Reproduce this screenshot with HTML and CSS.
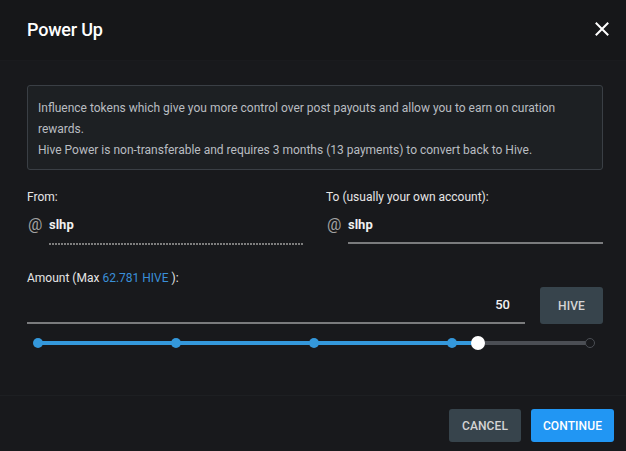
FILE: index.html
```html
<!DOCTYPE html>
<html>
<head>
<meta charset="utf-8">
<link rel="stylesheet" href="styles.css">
</head>
<body>
<div class="dialog">
  <header class="head">
    <h1 class="title">Power Up</h1>
    <button class="close" aria-label="close">
      <svg width="14" height="14" viewBox="0 0 14 14"><path d="M1.5 1.5 L12.5 12.5 M12.5 1.5 L1.5 12.5" stroke="#fff" stroke-width="2" stroke-linecap="square"/></svg>
    </button>
  </header>
  <main class="body">
    <div class="info">
      <p>Influence tokens which give you more control over post payouts and allow you to earn on curation rewards.</p>
      <p>Hive Power is non-transferable and requires 3 months (13 payments) to convert back to Hive.</p>
    </div>
    <div class="accounts">
      <div class="field">
        <div class="label">From:</div>
        <div class="row">
          <span class="at">@</span>
          <span class="value dashed">slhp</span>
        </div>
      </div>
      <div class="field">
        <div class="label">To (usually your own account):</div>
        <div class="row">
          <span class="at">@</span>
          <span class="value solid">slhp</span>
        </div>
      </div>
    </div>
    <div class="label amount-label">Amount (Max <span class="link">62.781 HIVE</span> ):</div>
    <div class="amount-row">
      <div class="amount-input">50</div>
      <button class="btn btn-grey hive">HIVE</button>
    </div>
    <div class="slider">
      <div class="track"></div>
      <div class="fill" style="width: 79.64%"></div>
      <span class="mark on" style="left: 0%"></span>
      <span class="mark on" style="left: 25%"></span>
      <span class="mark on" style="left: 50%"></span>
      <span class="mark on" style="left: 75%"></span>
      <span class="mark off" style="left: 100%"></span>
      <span class="thumb" style="left: 79.64%"></span>
    </div>
  </main>
  <footer class="foot">
    <button class="btn btn-grey">CANCEL</button>
    <button class="btn btn-blue">CONTINUE</button>
  </footer>
</div>
</body>
</html>
```
FILE: styles.css
```css
* { box-sizing: border-box; }
html, body {
  margin: 0;
  padding: 0;
  background: #18191c;
  font-family: Roboto, "Liberation Sans", sans-serif;
  color: #e8e8e8;
}
.dialog {
  width: 626px;
  height: 451px;
  background: #18191c;
  display: flex;
  flex-direction: column;
}
.head {
  height: 61px;
  background: #161719;
  border-bottom: 1px solid #1a1b1e;
  display: flex;
  align-items: center;
  justify-content: space-between;
  padding: 0 17px 0 27px;
}
.title {
  margin: 0;
  font-size: 18px;
  font-weight: 500;
  color: #fff;
  letter-spacing: -0.2px;
  padding-bottom: 1px;
}
.close {
  background: none;
  border: 0;
  padding: 0;
  width: 14px;
  height: 14px;
  display: flex;
  margin-bottom: 2px;
}
.body {
  padding: 24px 23px 42px 27px;
}
.info {
  border: 1px solid #3a3f45;
  border-radius: 3px;
  background: #1d2023;
  padding: 12px 10px 8px;
  font-size: 12px;
  line-height: 21px;
  color: #b9bdc1;
}
.info p { margin: 0; }
.accounts {
  display: grid;
  grid-template-columns: 1fr 1fr;
  column-gap: 22px;
  margin-top: 19px;
}
.label {
  font-size: 12px;
  line-height: 16px;
  color: #e6e6e6;
}
.row {
  display: flex;
  align-items: flex-start;
  margin-top: 12px;
}
.at {
  width: 20px;
  font-size: 16px;
  line-height: 16px;
  color: #a2a2a2;
  padding-left: 1px;
}
.value {
  flex: 1;
  font-size: 13px;
  font-weight: 700;
  line-height: 16px;
  color: #f0f0f0;
  padding-bottom: 9px;
  margin-left: 2px;
}
.dashed {
  background: linear-gradient(to right, #7d7d7d 2px, transparent 2px) left bottom / 3px 2px repeat-x;
  padding-bottom: 12px;
}
.solid {
  border-bottom: 2px solid #7a7b7d;
}
.amount-label {
  margin-top: 25px;
}
.link { color: #3a8fd8; }
.amount-row {
  display: flex;
  align-items: flex-end;
  margin-top: 1px;
  gap: 15px;
}
.amount-input {
  flex: 1;
  text-align: right;
  font-size: 13px;
  font-weight: 500;
  line-height: 16px;
  color: #f0f0f0;
  padding: 0 15px 9px 0;
  border-bottom: 2px solid #7a7b7d;
}
.btn {
  border: 0;
  border-radius: 3px;
  font-family: Roboto, "Liberation Sans", sans-serif;
  font-size: 12px;
  font-weight: 500;
  letter-spacing: 0.1px;
  cursor: pointer;
}
.btn-grey {
  background: #37444c;
  color: #d4d4d4;
}
.btn-blue {
  background: #2196f3;
  color: #fff;
}
.hive {
  width: 63px;
  height: 37px;
}
.slider {
  position: relative;
  height: 20px;
  margin: 9px 13px 0 11px;
}
.track {
  position: absolute;
  left: 0;
  right: 0;
  top: 8px;
  height: 4px;
  background: #4b4e54;
  border-radius: 2px;
}
.fill {
  position: absolute;
  left: 0;
  top: 8px;
  height: 4px;
  background: #3498db;
}
.mark {
  position: absolute;
  top: 10px;
  width: 10px;
  height: 10px;
  margin: -5px 0 0 -5px;
  border-radius: 50%;
}
.mark.on { background: #3498db; }
.mark.off {
  background: #18191c;
  border: 1.5px solid #4b4e54;
}
.thumb {
  position: absolute;
  top: 10px;
  width: 14px;
  height: 14px;
  margin: -7px 0 0 -7px;
  border-radius: 50%;
  background: #fff;
}
.foot {
  border-top: 1px solid #1d1f22;
  display: flex;
  justify-content: flex-end;
  gap: 10px;
  padding: 13px 12px 0 0;
}
.foot .btn {
  height: 33px;
}
.foot .btn-grey { width: 72px; }
.foot .btn-blue { width: 83px; }
```
